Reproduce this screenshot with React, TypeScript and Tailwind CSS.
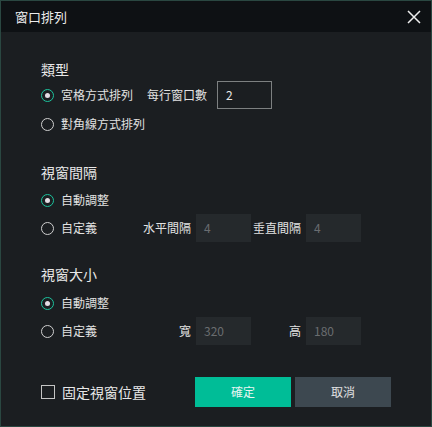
import React, { useState } from 'react';

const font = { fontFamily: '"Noto Sans CJK TC", "Noto Sans CJK SC", sans-serif' };

function Radio({ checked, label, onClick }: { checked: boolean; label: string; onClick: () => void }) {
  return (
    <button type="button" onClick={onClick} className="flex items-center gap-[7px] text-[12px] text-[#e2e2e2]">
      <span
        className={`flex h-[13px] w-[13px] items-center justify-center rounded-full border-[1.5px] ${
          checked ? 'border-[#1cc39d]' : 'border-[#d0d0d0]'
        }`}>
        {checked && <span className="h-[5px] w-[5px] rounded-full bg-[#e4dde4]" />}
      </span>
      <span className="leading-none">{label}</span>
    </button>
  );
}

function DimInput({ value }: { value: string }) {
  return (
    <div className="flex h-[28px] w-[55px] items-center bg-[#25292c] px-[8px] text-[12px] text-[#6a6d70]">
      {value}
    </div>
  );
}

export default function App() {
  const [layout, setLayout] = useState<'grid' | 'diag'>('grid');
  const [gap, setGap] = useState<'auto' | 'custom'>('auto');
  const [size, setSize] = useState<'auto' | 'custom'>('auto');
  const [fixed, setFixed] = useState(false);

  return (
    <div style={font} className="flex h-[427px] w-[432px] flex-col border border-[#2a4741] bg-[#1b1e21]">
      <div className="flex h-[31px] shrink-0 items-center justify-between bg-[#0e1114] pl-[14px] pr-[9px]">
        <span className="text-[13px] text-[#ececec]">窗口排列</span>
        <svg width="14" height="14" viewBox="0 0 14 14" className="mr-[1px]">
          <path d="M1 1 L13 13 M13 1 L1 13" stroke="#eeeeee" strokeWidth="1.5" />
        </svg>
      </div>

      <div className="flex flex-col pl-[40px]">
        {/* 類型 */}
        <div className="mt-[27px] h-[20px] text-[14px] leading-[20px] text-[#e8e8e8]">類型</div>
        <div className="mt-[2px] flex h-[28px] items-center">
          <Radio checked={layout === 'grid'} label="宮格方式排列" onClick={() => setLayout('grid')} />
          <span className="ml-[14px] text-[12px] text-[#e2e2e2]">每行窗口數</span>
          <div className="ml-[10px] flex h-[28px] w-[55px] items-center border border-[#7d8081] px-[8px] text-[12px] text-[#e8e8e8]">
            2
          </div>
        </div>
        <div className="mt-[3px] flex h-[24px] items-center">
          <Radio checked={layout === 'diag'} label="對角線方式排列" onClick={() => setLayout('diag')} />
        </div>

        {/* 視窗間隔 */}
        <div className="mt-[26px] h-[20px] text-[14px] leading-[20px] text-[#e8e8e8]">視窗間隔</div>
        <div className="mt-[6px] flex h-[24px] items-center">
          <Radio checked={gap === 'auto'} label="自動調整" onClick={() => setGap('auto')} />
        </div>
        <div className="mt-[2px] flex h-[28px] items-center">
          <div className="w-[102px]">
            <Radio checked={gap === 'custom'} label="自定義" onClick={() => setGap('custom')} />
          </div>
          <span className="w-[48px] text-right text-[12px] text-[#e2e2e2]">水平間隔</span>
          <div className="ml-[5px]">
            <DimInput value="4" />
          </div>
          <span className="w-[50px] text-right text-[12px] text-[#e2e2e2]">垂直間隔</span>
          <div className="ml-[5px]">
            <DimInput value="4" />
          </div>
        </div>

        {/* 視窗大小 */}
        <div className="mt-[22px] h-[20px] text-[14px] leading-[20px] text-[#e8e8e8]">視窗大小</div>
        <div className="mt-[7px] flex h-[24px] items-center">
          <Radio checked={size === 'auto'} label="自動調整" onClick={() => setSize('auto')} />
        </div>
        <div className="mt-[2px] flex h-[28px] items-center">
          <div className="w-[102px]">
            <Radio checked={size === 'custom'} label="自定義" onClick={() => setSize('custom')} />
          </div>
          <span className="w-[48px] text-right text-[12px] text-[#e2e2e2]">寬</span>
          <div className="ml-[5px]">
            <DimInput value="320" />
          </div>
          <span className="w-[50px] text-right text-[12px] text-[#e2e2e2]">高</span>
          <div className="ml-[5px]">
            <DimInput value="180" />
          </div>
        </div>

        {/* footer */}
        <div className="mt-[32px] flex h-[30px] items-center">
          <button type="button" onClick={() => setFixed(!fixed)} className="flex w-[154px] items-center gap-[7px]">
            <span className="flex h-[14px] w-[14px] items-center justify-center border border-[#c4c4c4]">
              {fixed && <span className="h-[6px] w-[6px] bg-[#1cc39d]" />}
            </span>
            <span className="text-[14px] leading-none text-[#e8e8e8]">固定視窗位置</span>
          </button>
          <button type="button" className="h-[30px] w-[96px] bg-[#00bd97] text-[12px] text-[#e6f5f1]">
            確定
          </button>
          <button type="button" className="ml-[4px] h-[30px] w-[96px] bg-[#3d4850] text-[12px] text-[#e2e2e2]">
            取消
          </button>
        </div>
      </div>
    </div>
  );
}
